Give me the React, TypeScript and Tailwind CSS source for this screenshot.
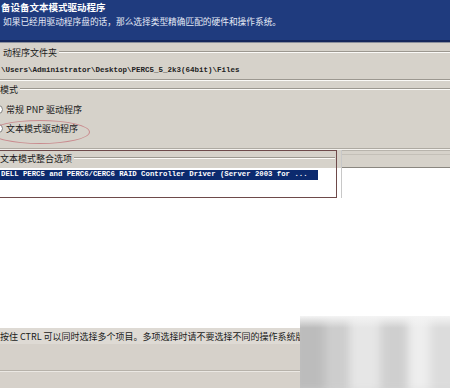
import React from "react";

const cjk = "font-['Noto_Sans_CJK_SC',sans-serif]";
const mono = "font-['Liberation_Mono','DejaVu_Sans_Mono',monospace]";

function Etched({ className = "" }: { className?: string }) {
  return (
    <div className={`flex-1 flex flex-col ${className}`}>
      <div className="h-px bg-[#9c9890]" />
      <div className="h-px bg-[#fbfaf7]" />
    </div>
  );
}

export default function App() {
  return (
    <div className={`relative w-[450px] h-[388px] overflow-hidden bg-white ${cjk} text-[9px] leading-none text-[#1a1a1a]`}>
      {/* header */}
      <div className="h-[40px] bg-[#1f3b7e] text-white pt-[2px]">
        <div className="ml-[1px] text-[9.5px] font-bold h-[12px] flex items-center">
          备设备文本模式驱动程序
        </div>
        <div className="ml-[3px] mt-[2px] h-[12px] flex items-center text-[#e6ebf7] text-[8.7px]">
          如果已经用驱动程序盘的话，那么选择类型精确匹配的硬件和操作系统。
        </div>
      </div>
      <div className="h-[2px] bg-[#15285c]" />
      <div className="h-px bg-[#8a8f9c]" />

      {/* gray dialog body */}
      <div className="bg-[#d6d2ca] h-[107px] pt-[4px] flex flex-col">
        <div className="flex items-center h-[10px] gap-[2px]">
          <span className="ml-[3px]">动程序文件夹</span>
          <Etched />
        </div>
        <div className={`${mono} text-[7.5px] font-bold text-[#222] ml-[1px] mt-[9px] h-[10px] flex items-center`}>
          \Users\Administrator\Desktop\PERC5_5_2k3(64bit)\Files
        </div>
        <Etched className="mt-[3px] flex-none" />
        <div className="flex items-center h-[10px] gap-[2px] mt-[3px]">
          <span>模式</span>
          <Etched />
        </div>
        <div className="flex items-center h-[12px] mt-[9px] gap-[3px]">
          <span className="ml-[-6px] w-[9px] h-[9px] rounded-full bg-white border border-[#808080]" />
          <span>常规 PNP 驱动程序</span>
        </div>
        <div className="flex items-center h-[12px] mt-[7px] gap-[3px]">
          <span className="ml-[-6px] w-[9px] h-[9px] rounded-full bg-white border border-[#808080] flex items-center justify-center">
            <span className="w-[3px] h-[3px] rounded-full bg-black" />
          </span>
          <span>文本模式驱动程序</span>
        </div>
        <div className="mt-auto flex flex-col">
          <div className="h-px bg-[#aeaaa2]" />
          <div className="h-px bg-[#f4f2ee]" />
        </div>
      </div>

      {/* list group straddling gray / white */}
      <div className="flex h-[48px]">
        <div className="w-[337px] border border-l-0 border-[#6e4a4a] bg-[linear-gradient(#d6d2ca_0,#d6d2ca_17px,#ffffff_17px)] flex flex-col">
          <div className="flex items-center h-[12px] mt-[1px] gap-[2px] pr-[1px]">
            <span>文本模式整合选项</span>
            <Etched />
          </div>
          <div className={`${mono} mt-[6px] w-[318px] h-[10px] bg-[#0c2a6e] text-white text-[7.3px] font-bold flex items-center whitespace-nowrap overflow-hidden`}>
            <span className="ml-[1px]">DELL PERC5 and PERC6/CERC6 RAID Controller Driver (Server 2003 for ...</span>
          </div>
        </div>
        <div className="w-[5px] border-r border-[#c8c8c8] bg-[linear-gradient(#d6d2ca_0,#d6d2ca_18px,#ffffff_18px)]" />
        <div className="flex-1 bg-[linear-gradient(#b8b4ac_0,#b8b4ac_1px,#d6d2ca_1px,#d6d2ca_4px,#c4c0b8_4px,#c4c0b8_5px,#d6d2ca_5px,#d6d2ca_17px,#8a8780_17px,#8a8780_18px,#ffffff_18px)]" />
      </div>

      {/* white space */}
      <div className="h-[130px] bg-white" />

      {/* footer */}
      <div className="h-[60px] bg-[#d6d1ca] flex flex-col">
        <div className="h-[16px] flex items-center bg-[#dedad4]">
          <span>按住 CTRL 可以同时选择多个项目。多项选择时请不要选择不同的操作系统版本</span>
        </div>
        <div className="mt-[26px] flex flex-col">
          <div className="h-px bg-[#b7b2aa]" />
          <div className="h-px bg-[#ebe8e3]" />
        </div>
      </div>

      {/* red annotation ellipse */}
      <div className="absolute left-[-10px] top-[120px] w-[100px] h-[24px] rounded-[50%] border border-[#c98b8e]" />

      {/* blurred watermark */}
      <div className="absolute left-[300px] top-[316px] w-[150px] h-[72px] bg-[#d6d6d6] overflow-hidden">
        <div className="flex h-full blur-[4px] scale-110">
          <div className="w-[30px] bg-[#bcbcbc]" />
          <div className="w-[22px] bg-[#cdcdcd]" />
          <div className="w-[28px] bg-[#e6e6e6]" />
          <div className="w-[25px] bg-[#cfcfcf]" />
          <div className="w-[20px] bg-[#eeeeee]" />
          <div className="flex-1 bg-[#dcdcdc]" />
        </div>
        <div className="absolute inset-x-0 top-0 h-[12px] bg-[linear-gradient(#f4f4f4,transparent)]" />
      </div>
    </div>
  );
}
